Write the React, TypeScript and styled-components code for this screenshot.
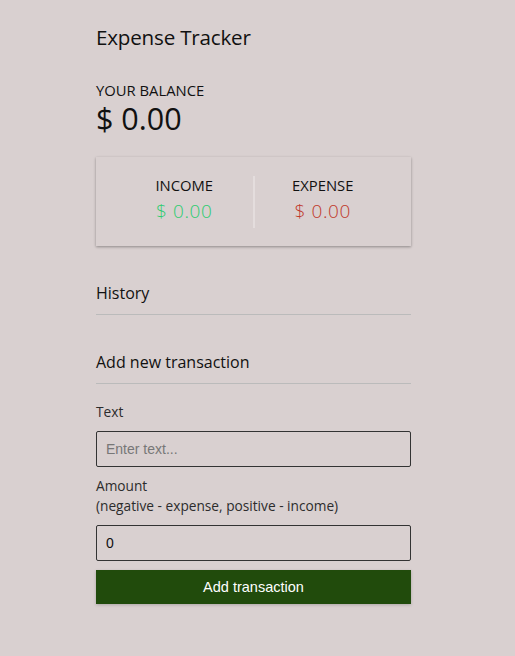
import React from "react";
import styled, { createGlobalStyle } from "styled-components";

const Global = createGlobalStyle`
  * { box-sizing: border-box; }
  body {
    margin: 0;
    background: #d9d0d0;
    font-family: "Open Sans", "Lato", sans-serif;
    color: #111;
    min-height: 656px;
  }
`;

const Container = styled.div`
  width: 315px;
  margin-left: 96px;
  padding-top: 24px;
`;

const Title = styled.h2`
  margin: 0;
  font-size: 20.6px;
  font-weight: 400;
  line-height: 26px;
  letter-spacing: -0.2px;
`;

const BalanceLabel = styled.h4`
  margin: 31px 0 0;
  font-size: 14.8px;
  font-weight: 400;
  line-height: 18px;
  text-transform: uppercase;
`;

const Balance = styled.h1`
  margin: 0;
  font-size: 30.5px;
  font-weight: 400;
  line-height: 38px;
`;

const Card = styled.div`
  margin-top: 20px;
  height: 89px;
  padding: 0 20px;
  display: flex;
  align-items: center;
  background: #d9d0d0;
  box-shadow: 0 1px 3px rgba(0, 0, 0, 0.22), 0 1px 2px rgba(0, 0, 0, 0.14);
`;

const Col = styled.div<{ $divider?: boolean }>`
  flex: 1;
  text-align: center;
  height: 52px;
  display: flex;
  flex-direction: column;
  ${(p) => (p.$divider ? "border-right: 2px solid #e4dddd;" : "")}
`;

const ColLabel = styled.h4`
  margin: 0;
  font-size: 14.8px;
  font-weight: 400;
  line-height: 18px;
  text-transform: uppercase;
`;

const Money = styled.p<{ $color: string }>`
  margin: 6px 0 0;
  font-size: 19px;
  font-weight: 300;
  line-height: 22px;
  letter-spacing: 0.6px;
  color: ${(p) => p.$color};
`;

const Section = styled.h3`
  margin: 36px 0 0;
  font-size: 16px;
  font-weight: 400;
  line-height: 22px;
  padding-bottom: 10px;
  border-bottom: 1px solid #bbb;
`;

const Form = styled.form`
  margin-top: 18px;
`;

const Field = styled.div`
  display: flex;
  flex-direction: column;
`;

const Label = styled.label`
  font-size: 13.7px;
  line-height: 20px;
  color: #2c2c2c;
`;

const Input = styled.input`
  width: 100%;
  height: 36px;
  margin: 9px 0 9px;
  padding: 0 9px;
  border: 1px solid #333;
  border-radius: 2px;
  background: transparent;
  font-family: "Liberation Sans", Arial, sans-serif;
  font-size: 14px;
  color: #111;
  &::placeholder { color: #777; }
`;

const Button = styled.button`
  display: block;
  width: 100%;
  height: 34px;
  border: 0;
  background: #214b0c;
  color: #fff;
  font-family: "Liberation Sans", Arial, sans-serif;
  font-size: 14.5px;
  box-shadow: 0 1px 3px rgba(0, 0, 0, 0.2);
`;

export default function App() {
  return (
    <>
      <Global />
      <Container>
        <Title>Expense Tracker</Title>
        <BalanceLabel>Your Balance</BalanceLabel>
        <Balance>$ 0.00</Balance>
        <Card>
          <Col $divider>
            <ColLabel>Income</ColLabel>
            <Money $color="#2ecc71">$ 0.00</Money>
          </Col>
          <Col>
            <ColLabel>Expense</ColLabel>
            <Money $color="#c0392b">$ 0.00</Money>
          </Col>
        </Card>
        <Section>History</Section>
        <Section>Add new transaction</Section>
        <Form>
          <Field>
            <Label>Text</Label>
            <Input type="text" placeholder="Enter text..." />
          </Field>
          <Field>
            <Label>
              Amount <br />
              (negative - expense, positive - income)
            </Label>
            <Input type="number" defaultValue="0" />
          </Field>
          <Button type="button">Add transaction</Button>
        </Form>
      </Container>
    </>
  );
}
